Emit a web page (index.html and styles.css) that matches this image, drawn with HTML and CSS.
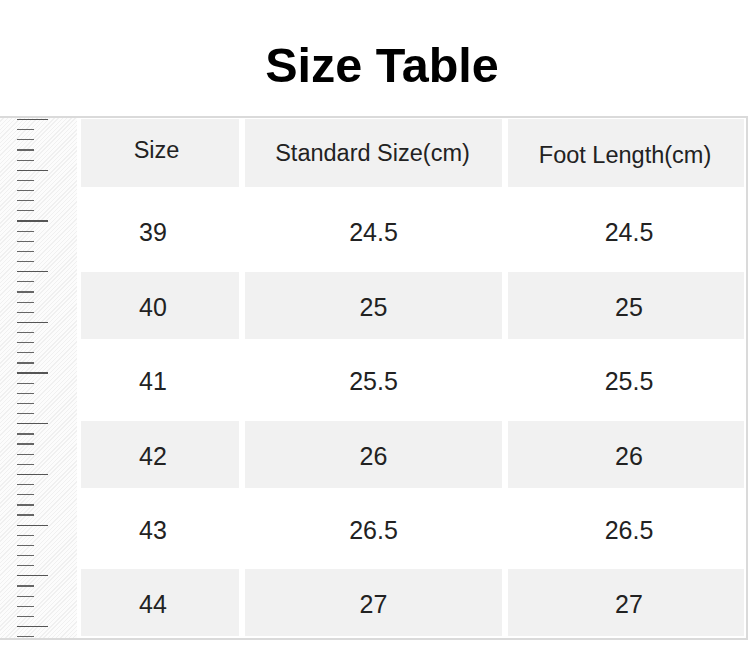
FILE: index.html
```html
<!DOCTYPE html>
<html>
<head>
<meta charset="utf-8">
<link rel="stylesheet" href="styles.css">
</head>
<body>
<h1 class="title">Size Table</h1>
<div class="frame">
  <div class="ruler"></div>
  <div class="table">
    <div class="cell head c1">Size</div>
    <div class="cell head c2">Standard Size(cm)</div>
    <div class="cell head c3">Foot Length(cm)</div>

    <div class="cell data c1">39</div>
    <div class="cell data c2">24.5</div>
    <div class="cell data c3">24.5</div>

    <div class="cell data c1 shade">40</div>
    <div class="cell data c2 shade">25</div>
    <div class="cell data c3 shade">25</div>

    <div class="cell data c1">41</div>
    <div class="cell data c2">25.5</div>
    <div class="cell data c3">25.5</div>

    <div class="cell data c1 shade">42</div>
    <div class="cell data c2 shade">26</div>
    <div class="cell data c3 shade">26</div>

    <div class="cell data c1">43</div>
    <div class="cell data c2">26.5</div>
    <div class="cell data c3">26.5</div>

    <div class="cell data c1 shade">44</div>
    <div class="cell data c2 shade">27</div>
    <div class="cell data c3 shade">27</div>
  </div>
</div>
</body>
</html>
```

FILE: styles.css
```css
html, body {
  margin: 0;
  padding: 0;
  background: #ffffff;
}

body {
  font-family: "Liberation Sans", Arial, sans-serif;
  color: #222222;
  width: 750px;
}

.title {
  margin: 0;
  padding-top: 38px;
  height: 54px;
  line-height: 54px;
  font-size: 48.5px;
  font-weight: bold;
  color: #000000;
  text-align: center;
  padding-left: 14px;
}

.frame {
  margin-top: 24px;
  box-sizing: border-box;
  width: 748px;
  border-top: 2px solid #dadada;
  border-right: 2px solid #dadada;
  border-bottom: 2px solid #dadada;
  display: flex;
  padding-right: 2px;
}

.ruler {
  width: 77px;
  flex: none;
  background:
    repeating-linear-gradient(to bottom, #555555 0 1.2px, transparent 1.2px 50.7px) 17px 1px / 31px 100% no-repeat,
    repeating-linear-gradient(to bottom, #666666 0 1.2px, transparent 1.2px 10.14px) 17px 1px / 17px 100% no-repeat,
    repeating-linear-gradient(135deg, #fcfcfc 0 2px, #f0f0f0 2px 3px);
}

.table {
  margin-left: 4px;
  padding-top: 1px;
  padding-bottom: 2px;
  display: grid;
  grid-template-columns: 158px 257px 236px;
  grid-template-rows: 71px repeat(6, 67px);
  column-gap: 6px;
  row-gap: 7.4px;
}

.cell {
  display: flex;
  align-items: center;
  justify-content: center;
  box-sizing: border-box;
}

.head {
  background: #f1f1f1;
  font-size: 23.5px;
  margin-bottom: 3px;
}

.head.c1 {
  padding-right: 7px;
  padding-bottom: 6px;
}

.head.c2 {
  padding-right: 2px;
}

.head.c3 {
  padding-top: 4px;
  padding-right: 2px;
}

.data {
  font-size: 25px;
  padding-top: 4px;
}

.data.c1 {
  padding-right: 14px;
}

.data.c3 {
  padding-left: 6px;
}

.shade {
  background: #f1f1f1;
}
```
